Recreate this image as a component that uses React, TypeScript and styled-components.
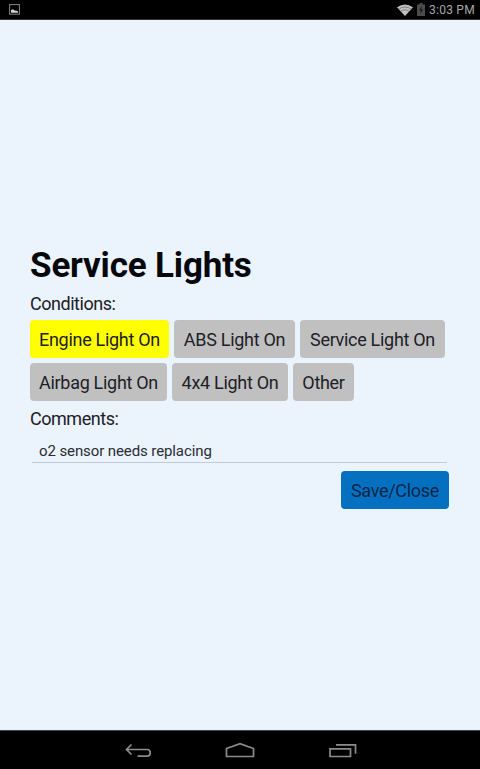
import React, { useState } from 'react';
import styled, { createGlobalStyle } from 'styled-components';

const GlobalStyle = createGlobalStyle`
  * { box-sizing: border-box; }
  body { margin: 0; background: #ebf3fc; }
`;

const Screen = styled.div`
  width: 480px;
  height: 769px;
  display: flex;
  flex-direction: column;
  overflow: hidden;
  background: #ebf3fc;
  color: #1d2027;
  font-family: Roboto, 'Liberation Sans', sans-serif;
`;

const StatusBar = styled.header`
  height: 20px;
  flex: none;
  display: flex;
  align-items: center;
  justify-content: space-between;
  padding: 0 4px 0 9px;
  background: #000;
  border-bottom: 1px solid #33343a;
`;

const StatusIcons = styled.div`
  display: flex;
  align-items: center;
  gap: 4px;
  height: 19px;
`;

const Clock = styled.span`
  width: 47px;
  padding-top: 2px;
  font-size: 12px;
  line-height: 17px;
  letter-spacing: 0.25px;
  white-space: nowrap;
  color: #a8a8a8;
`;

const Content = styled.main`
  flex: 1;
  padding: 223px 31px 0 30px;
`;

const Title = styled.h1`
  margin: 0;
  height: 46px;
  font-size: 35px;
  line-height: 46px;
  font-weight: 700;
  letter-spacing: -0.17px;
  white-space: nowrap;
  color: #05070b;
`;

const Label = styled.div<{ $top: number }>`
  height: 22px;
  margin-top: ${(p) => p.$top}px;
  font-size: 18px;
  line-height: 22px;
  letter-spacing: -0.47px;
`;

const Conditions = styled.div`
  display: flex;
  flex-direction: column;
  gap: 5px;
  margin-top: 5px;
`;

const ConditionRow = styled.div`
  display: flex;
  gap: 5px;
`;

const Button = styled.button<{ $tone: string; $width: number }>`
  width: ${(p) => p.$width}px;
  height: 38px;
  padding: 1px 0 0;
  border: 0;
  border-radius: 4px;
  background: ${(p) => p.$tone};
  color: inherit;
  font: 18px/37px Roboto, 'Liberation Sans', sans-serif;
  letter-spacing: -0.3px;
  white-space: nowrap;
`;

const SaveButton = styled(Button)`
  color: #062749;
`;

const CommentField = styled.input`
  display: block;
  width: 415px;
  height: 28px;
  margin: 5px 0 0 2px;
  padding: 4px 7px 0;
  border: 0;
  border-bottom: 1px solid #c4cad5;
  outline: 0;
  background: transparent;
  color: #2a2d34;
  font: 15px/20px Roboto, 'Liberation Sans', sans-serif;
  letter-spacing: -0.1px;
`;

const Actions = styled.div`
  display: flex;
  justify-content: flex-end;
  margin-top: 8px;
`;

const NavBar = styled.nav`
  height: 39px;
  flex: none;
  display: flex;
  justify-content: center;
  align-items: center;
  gap: 73px;
  background: #000;
  border-top: 1px solid #3c4446;
`;

const NavIcon = styled.svg`
  width: 30px;
  height: 20px;
  fill: none;
  stroke: #8c8c8c;
  stroke-width: 1.7;
`;

const rows = [
  [['Engine Light On', 139], ['ABS Light On', 121], ['Service Light On', 145]],
  [['Airbag Light On', 137], ['4x4 Light On', 116], ['Other', 61]],
] as [string, number][][];

export default function App() {
  const [selected, setSelected] = useState('Engine Light On');
  const [comment, setComment] = useState('o2 sensor needs replacing');
  return (
    <>
      <GlobalStyle />
      <Screen>
        <StatusBar>
          <svg width="11" height="11" viewBox="0 0 11 11">
            <rect x=".6" y=".6" width="9.8" height="9.6" fill="none" stroke="#858585" />
            <path d="M2 8.800V6l2-.7 2 1.500 1-.4 2 1v1.400z" fill="#d5d5d5" />
          </svg>
          <StatusIcons>
            <svg width="16" height="12" viewBox="0 0 16 12">
              <path d="M0 3.200Q8-2.400 16 3.200L8 12z" fill="#c0c0c0" />
              <path d="M1.600 5.200Q8 .8 14.400 5.200M3.600 7.500Q8 4.200 12.400 7.500" fill="none" stroke="#555" strokeWidth=".6" />
            </svg>
            <svg width="8" height="13" viewBox="0 0 8 13">
              <path d="M2.500 0h3v1.500H8V13H0V1.500h2.500z" fill="#4c4c4c" />
              <path d="M4.700 3L2.200 7.500H4L3.400 11 6 6.400H4.300z" fill="#161616" />
            </svg>
            <Clock>3:03 PM</Clock>
          </StatusIcons>
        </StatusBar>
        <Content>
          <Title>Service Lights</Title>
          <Label $top={4}>Conditions:</Label>
          <Conditions>
            {rows.map((row, i) => (
              <ConditionRow key={i}>
                {row.map(([name, width]) => (
                  <Button
                    key={name}
                    $width={width}
                    $tone={selected === name ? '#ffff00' : '#c0c0c0'}
                    onClick={() => setSelected(name)}
                  >
                    {name}
                  </Button>
                ))}
              </ConditionRow>
            ))}
          </Conditions>
          <Label $top={7}>Comments:</Label>
          <CommentField value={comment} onChange={(e) => setComment(e.target.value)} />
          <Actions>
            <SaveButton $tone="#0670c0" $width={108}>Save/Close</SaveButton>
          </Actions>
        </Content>
        <NavBar>
          <NavIcon viewBox="0 0 30 20">
            <path d="M9.500 4.500L4.500 9.500l5 5M5 9.500H25a3.200 3.200 0 0 1 3.200 3.200v.3a3.200 3.200 0 0 1-3.200 3.200H15.500" />
          </NavIcon>
          <NavIcon viewBox="0 0 30 20">
            <path d="M1.500 8.500L15 3.700l13.500 4.800v8h-27z" />
          </NavIcon>
          <NavIcon viewBox="0 0 30 20">
            <path d="M2 8.800h20.500v7.700H2zM8 4.800h19.500v9" />
          </NavIcon>
        </NavBar>
      </Screen>
    </>
  );
}
